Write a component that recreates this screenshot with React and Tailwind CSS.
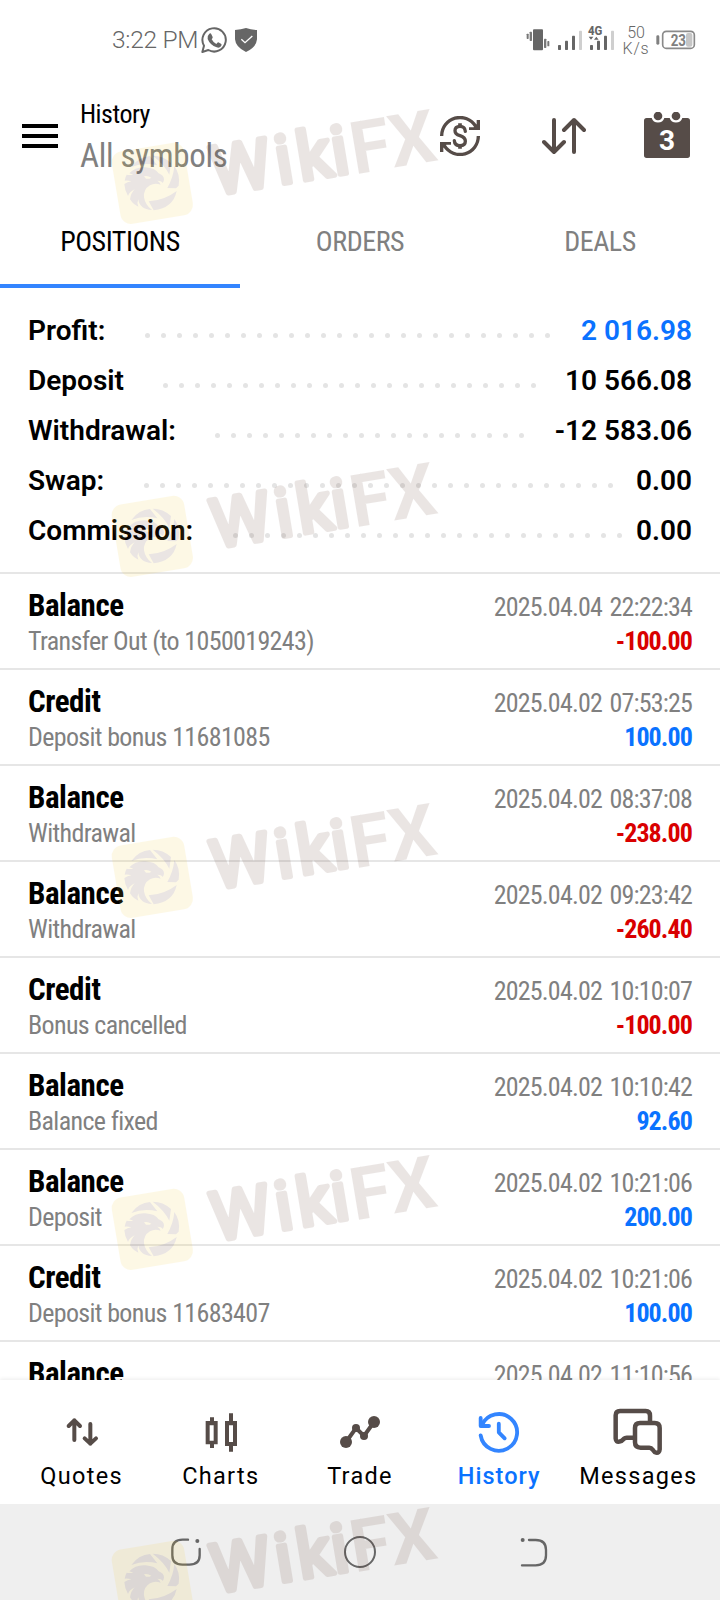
import React from "react";

const SUMMARY = [
  { label: "Profit:", value: "2 016.98", color: "text-[#0a72ff]", dots: 26 },
  { label: "Deposit", value: "10 566.08", color: "text-black", dots: 24 },
  { label: "Withdrawal:", value: "-12 583.06", color: "text-black", dots: 20 },
  { label: "Swap:", value: "0.00", color: "text-black", dots: 30 },
  { label: "Commission:", value: "0.00", color: "text-black", dots: 25 },
];

const DEALS = [
  { type: "Balance", note: "Transfer Out (to 1050019243)", time: "2025.04.04 22:22:34", amount: "-100.00" },
  { type: "Credit", note: "Deposit bonus 11681085", time: "2025.04.02 07:53:25", amount: "100.00" },
  { type: "Balance", note: "Withdrawal", time: "2025.04.02 08:37:08", amount: "-238.00" },
  { type: "Balance", note: "Withdrawal", time: "2025.04.02 09:23:42", amount: "-260.40" },
  { type: "Credit", note: "Bonus cancelled", time: "2025.04.02 10:10:07", amount: "-100.00" },
  { type: "Balance", note: "Balance fixed", time: "2025.04.02 10:10:42", amount: "92.60" },
  { type: "Balance", note: "Deposit", time: "2025.04.02 10:21:06", amount: "200.00" },
  { type: "Credit", note: "Deposit bonus 11683407", time: "2025.04.02 10:21:06", amount: "100.00" },
  { type: "Balance", note: "", time: "2025.04.02 11:10:56", amount: "" },
];

const TABS = ["POSITIONS", "ORDERS", "DEALS"];

const WATERMARKS = ["top-[96px]", "top-[449px]", "top-[790px]", "top-[1142px]", "top-[1494px]"];

/* ICONS */
const WhatsAppIcon = () => (
  <svg className="w-[26px] h-[26px]" viewBox="0 0 78 78" fill="none">
    <path d="M4 75 L9 56 A35 35 0 1 1 22 69 Z" stroke="#666" strokeWidth="6" strokeLinejoin="round" />
    <path
      d="M25 20 q4 -3 6 2 l4 8 q1 3 -3 7 q5 10 14 14 q4 -6 6 -5 l9 5 q2 2 -1 7 q-5 6 -13 3 q-20 -7 -27 -25 q-2 -10 5 -16z"
      fill="#666"
    />
  </svg>
);

const ShieldIcon = () => (
  <svg className="w-[22px] h-6" viewBox="0 0 66 72" fill="none">
    <path d="M33 0 Q48 5 66 6 V34 Q64 58 33 72 Q2 58 0 34 V6 Q18 5 33 0z" fill="#666" />
    <path d="M19 34 L30 44 L52 24" stroke="#fff" strokeWidth="4" />
  </svg>
);

const VibrateIcon = () => (
  <svg className="w-6 h-6" viewBox="0 0 72 72" fill="#666">
    <rect x="21" y="4" width="30" height="63" rx="3" />
    <rect x="2" y="17" width="6" height="16" rx="2" fill="#777" />
    <rect x="11" y="11" width="7" height="28" rx="2" fill="#777" />
    <rect x="54" y="32" width="7" height="28" rx="2" fill="#777" />
    <rect x="64" y="39" width="6" height="16" rx="2" fill="#777" />
  </svg>
);

const SignalBars = () => (
  <svg className="w-[26px] h-6" viewBox="0 0 78 72" fill="#666">
    <rect x="3" y="51" width="9" height="15" rx="2" />
    <rect x="24" y="38" width="9" height="28" rx="2" />
    <rect x="45" y="23" width="9" height="43" rx="2" />
    <rect x="66" y="8" width="9" height="58" rx="2" fill="#cfcfcf" />
  </svg>
);

const SignalBars4G = () => (
  <svg className="w-[27px] h-6 overflow-visible" viewBox="0 0 81 72" fill="#666">
    <text x="0" y="20" fontSize="37" fontWeight="800" fontFamily="Roboto" textLength="43" lengthAdjust="spacingAndGlyphs">
      4G
    </text>
    <path d="M2 26 h14 l-7 9z M18 35 h14 l-7 -9z" />
    <rect x="6" y="51" width="9" height="15" rx="2" />
    <rect x="27" y="38" width="9" height="28" rx="2" />
    <rect x="48" y="23" width="9" height="43" rx="2" />
    <rect x="69" y="8" width="9" height="58" rx="2" fill="#cfcfcf" />
  </svg>
);

const BatteryIcon = () => (
  <svg className="w-10 h-5" viewBox="0 0 120 60" fill="none">
    <rect x="1" y="16" width="9" height="28" rx="4" fill="#808080" />
    <rect x="20" y="4" width="95" height="51" rx="11" stroke="#8a8a8a" strokeWidth="5" />
    <rect x="90" y="9" width="19" height="41" rx="6" fill="#c6c6c6" />
    <text x="44" y="47" fontSize="47" fontWeight="700" fontFamily="Roboto" fill="#808080" textLength="46" lengthAdjust="spacingAndGlyphs">
      23
    </text>
  </svg>
);

const CurrencyIcon = () => (
  <svg className="w-10 h-10" viewBox="0 0 120 120" fill="none" stroke="#564c48" strokeWidth="10">
    <path d="M5 60 A55 55 0 0 1 107 31" />
    <path d="M115 60 A55 55 0 0 1 13 89" />
    <path d="M120 12 V42 H87 V34 H101 L110 24 V12z" fill="#564c48" stroke="none" />
    <path d="M0 108 V78 H33 V86 H19 L10 96 V108z" fill="#564c48" stroke="none" />
    <path
      d="M76 46 Q75 31 60 31 Q45 31 45 44 Q45 54 60 59 Q76 64 76 76 Q76 89 60 89 Q44 89 43 74"
      strokeLinecap="round"
    />
    <path d="M60 22 V31 M60 89 V98" strokeWidth="11" />
  </svg>
);

const SortIcon = () => (
  <svg className="w-11 h-10" viewBox="0 0 132 120" fill="none" stroke="#564c48" strokeWidth="12" strokeLinecap="round" strokeLinejoin="round">
    <path d="M36 12 V108 M6 78 L36 108 L66 78" />
    <path d="M96 108 V12 M66 42 L96 12 L126 42" />
  </svg>
);

const CalendarIcon = () => (
  <svg className="w-[46px] h-[46px]" viewBox="0 0 138 138" fill="#564c48">
    <path d="M8 18 H23 A20 20 0 0 0 61 18 H77 A20 20 0 0 0 115 18 H130 Q138 18 138 26 V130 Q138 138 130 138 H8 Q0 138 0 130 V26 Q0 18 8 18z" />
    <circle cx="42" cy="12" r="13" />
    <circle cx="96" cy="12" r="13" />
    <text x="69" y="114" fontSize="84" fontWeight="700" fontFamily="Roboto" fill="#fff" textAnchor="middle">
      3
    </text>
  </svg>
);

const QuotesIcon = () => (
  <svg className="w-12 h-12" viewBox="0 0 144 144" fill="none" stroke="#564c48" strokeWidth="12" strokeLinecap="round" strokeLinejoin="round">
    <path d="M49 96 V37 M32 54 L49 37 L66 54" />
    <path d="M97 48 V107 M80 91 L97 107 L114 91" />
  </svg>
);

const ChartsIcon = () => (
  <svg className="w-12 h-12" viewBox="0 0 144 144" fill="#564c48">
    <path fillRule="evenodd" d="M39 28 h12 v11 h11 v70 h-11 v11 h-12 v-11 h-13 v-70 h13z M38 52 v46 h12 v-46z" />
    <path fillRule="evenodd" d="M96 16 h12 v23 h12 v75 h-12 v17 h-12 v-17 h-12 v-75 h12z M96 52 v50 h12 v-50z" />
  </svg>
);

const TradeIcon = () => (
  <svg className="w-12 h-12" viewBox="0 0 144 144" fill="#564c48">
    <path d="M30 102 L60 60 L84 84 L114 42" fill="none" stroke="#564c48" strokeWidth="12" />
    <circle cx="30" cy="102" r="18" />
    <circle cx="60" cy="60" r="12" />
    <circle cx="84" cy="84" r="12" />
    <circle cx="114" cy="42" r="18" />
  </svg>
);

const HistoryIcon = () => (
  <svg className="w-12 h-12" viewBox="0 0 144 144" fill="none" stroke="#3385ff" strokeWidth="11.5" strokeLinecap="round" strokeLinejoin="round">
    <path d="M17 82 A55 55 0 1 0 21 51" />
    <path d="M17 30 V54 H42" />
    <path d="M71.4 47 V73 L89 91" />
  </svg>
);

const MessagesIcon = () => (
  <svg className="w-12 h-12 overflow-visible" viewBox="0 0 144 144" fill="none" stroke="#564c48" strokeWidth="13.5" strokeLinecap="round" strokeLinejoin="round">
    <path d="M108 41 V23 Q108 9 95 9 H18 Q5 9 5 22 V92 Q6 103 16 101 Q24 99 30 92 Q33 89 38 89 H58" />
    <path d="M78 45 H122 Q137 45 137 60 V124 Q136 136 126 134 Q121 133 116 125 Q112 119 106 119 H80 Q63 119 63 103 V60 Q63 45 78 45z" />
  </svg>
);

const NAV = [
  { label: "Quotes", icon: QuotesIcon },
  { label: "Charts", icon: ChartsIcon },
  { label: "Trade", icon: TradeIcon },
  { label: "History", icon: HistoryIcon, active: true },
  { label: "Messages", icon: MessagesIcon },
];

const Watermark = ({ top }) => (
  <svg className={`absolute left-[100px] w-[360px] h-[140px] opacity-[0.11] pointer-events-none ${top}`} viewBox="0 0 1080 420">
    <rect x="47" y="152" width="220" height="220" rx="32" fill="#f4c820" transform="rotate(-9.5 157 262)" />
    <g fill="#4a1f10" transform="translate(24 126)">
      {/* shutter blades */}
      <path d="M70 87 Q92 56 126 54 L148 82 Q108 72 70 87z" />
      <path d="M134 53 Q166 53 189 75 L184 110 Q168 78 134 53z" />
      <path d="M199 84 Q218 110 212 143 L204 151 L178 150 Q196 118 199 84z" />
      <path d="M206 159 Q196 210 137 217 L122 190 Q168 188 206 159z" />
      {/* eagle */}
      <path d="M64 106 Q82 86 112 88 Q142 90 152 106 Q168 112 168 124 Q168 130 164 135 Q160 128 148 128 Q156 133 158 140 Q140 134 126 142 Q106 154 108 178 Q112 202 132 216 Q112 215 104 208 Q92 198 91 184 Q86 194 91 206 Q76 200 66 184 Q68 166 80 154 Q64 162 60 174 Q50 158 49 138 Q58 132 70 130 Q58 126 50 128 Q52 116 56 110 Q66 112 76 110z" />
      <path d="M108 115 Q118 112 130 119 Q122 124 114 122z" fill="#f4c820" />
    </g>
    <g transform="translate(352 304) rotate(-9.5)" fill="#4a1f10" fontFamily="Roboto">
      <text
        x="-6 190 256 360"
        y="-8"
        fontSize="202"
        fontWeight="400"
        stroke="#4a1f10"
        strokeWidth="16"
        strokeLinejoin="round"
      >
        Wiki
      </text>
      <text x="417 536" y="0" fontSize="219" fontWeight="700">
        FX
      </text>
    </g>
  </svg>
);

const StatusBar = () => (
  <div className="h-20 flex items-center justify-between pl-[112px] pr-6 text-[#666]">
    <div className="flex items-center">
      <span className="text-[24.5px] font-[350] tracking-[-0.3px] mt-px">3:22 PM</span>
      <div className="ml-[3px] flex items-center gap-2">
        <WhatsAppIcon />
        <ShieldIcon />
      </div>
    </div>
    <div className="flex items-center">
      <VibrateIcon />
      <div className="ml-[7px] flex gap-[5px]">
        <SignalBars />
        <SignalBars4G />
      </div>
      <div className="ml-[9px] mt-0.5 w-6 flex flex-col items-center text-[16px] leading-4 font-[350]">
        <span>50</span>
        <span className="tracking-[0.8px]">K/s</span>
      </div>
      <div className="ml-2">
        <BatteryIcon />
      </div>
    </div>
  </div>
);

const Header = () => (
  <header className="h-28 flex items-center justify-between pl-[22px] pr-[30px]">
    <div className="flex items-center">
      <div className="w-9 flex flex-col gap-1.5">
        <div className="h-1 bg-black"></div>
        <div className="h-1 bg-black"></div>
        <div className="h-1 bg-black"></div>
      </div>
      <div className="ml-[22px] font-stretch-condensed">
        <h1 className="text-[26px] leading-[38px] tracking-[-0.5px]">History</h1>
        <p className="text-[33px] leading-[45px] tracking-[-0.3px] text-[#808080]">All symbols</p>
      </div>
    </div>
    <div className="flex items-center">
      <CurrencyIcon />
      <div className="ml-[62px]">
        <SortIcon />
      </div>
      <div className="ml-[58px] -mt-0.5">
        <CalendarIcon />
      </div>
    </div>
  </header>
);

const SummaryRow = ({ label, value, color, dots }) => (
  <div className="h-[50px] flex items-center text-[28px] font-[650]">
    <span>{label}</span>
    <div className="ml-[34px] mt-[9px] flex-1 flex">
      {Array.from({ length: dots }).map((_, i) => (
        <div key={i} className="w-4 shrink-0 flex items-center justify-center">
          <div className="w-[5px] h-[5px] rounded-full bg-[#e4e4e4]"></div>
        </div>
      ))}
    </div>
    <span className={color}>{value}</span>
  </div>
);

const DealRow = ({ type, note, time, amount }) => (
  <div className="h-24 shrink-0 border-t-2 border-[#e6e6e6] px-7 flex justify-between font-stretch-condensed">
    <div className="pt-3.5">
      <p className="text-[31px] leading-9 font-bold tracking-[-0.45px]">{type}</p>
      <p className="text-[26px] leading-[34px] tracking-[-0.65px] text-[#808080]">{note}</p>
    </div>
    <div className="pt-4 text-right text-[26px] leading-[34px]">
      <p className="tracking-[-0.82px] [word-spacing:2.3px] text-[#808080]">{time}</p>
      <p
        className={`font-bold tracking-[-0.9px] ${
          amount.startsWith("-") ? "text-[#d90000]" : "text-[#0a72ff]"
        }`}
      >
        {amount}
      </p>
    </div>
  </div>
);

const App = () => {
  return (
    <div className="relative w-[720px] h-[1600px] overflow-hidden flex flex-col bg-white text-black font-['Roboto',sans-serif]">
      <StatusBar />
      <Header />

      {/* TABS */}
      <div className="h-24 grid grid-cols-3 text-[28px] tracking-[-0.45px] font-stretch-condensed">
        {TABS.map((tab, i) => (
          <div
            key={tab}
            className={`pt-[7px] border-b-4 flex items-center justify-center ${
              i === 0 ? "border-[#3385ff]" : "border-transparent text-[#808080]"
            }`}
          >
            {tab}
          </div>
        ))}
      </div>

      {/* SUMMARY */}
      <div className="px-7 pt-[18px] pb-4">
        {SUMMARY.map((row) => (
          <SummaryRow key={row.label} {...row} />
        ))}
      </div>

      {/* DEALS */}
      <div className="flex-1 min-h-0 overflow-hidden flex flex-col">
        {DEALS.map((deal, i) => (
          <DealRow key={i} {...deal} />
        ))}
      </div>

      {/* BOTTOM NAV */}
      <nav className="h-[124px] shrink-0 px-3 pt-7 grid grid-cols-5 bg-white shadow-[0_-1px_4px_rgba(0,0,0,0.08)]">
        {NAV.map(({ label, icon: Icon, active }) => (
          <div key={label} className="flex flex-col items-center">
            <Icon />
            <span
              className={`mt-[5px] text-[23.5px] leading-[30px] ${
                active ? "font-medium tracking-[1px] text-[#0a72ff]" : "font-[380] tracking-[1.3px]"
              }`}
            >
              {label}
            </span>
          </div>
        ))}
      </nav>

      {/* SYSTEM BUTTONS */}
      <div className="h-24 shrink-0 bg-[#efefef] flex items-center justify-center gap-[142px]">
        <svg className="w-8 h-8" viewBox="0 0 96 96" fill="none" stroke="#666" strokeWidth="7" strokeLinecap="round">
          <path d="M54 11 H38 Q7 11 7 40 V58 Q7 86 37 86 H58 Q89 86 89 58 V39" />
          <circle cx="82" cy="15" r="6" fill="#666" stroke="none" />
        </svg>
        <svg className="w-8 h-8" viewBox="0 0 96 96" fill="none" stroke="#666" strokeWidth="6">
          <circle cx="48" cy="48" r="45" />
        </svg>
        <svg className="w-8 h-8" viewBox="0 0 96 96" fill="none" stroke="#666" strokeWidth="7" strokeLinecap="round">
          <path d="M33 12 H53 Q84 12 84 42 V58 Q84 88 53 88 H12" />
          <circle cx="14" cy="12" r="6" fill="#666" stroke="none" />
        </svg>
      </div>

      {WATERMARKS.map((top) => (
        <Watermark key={top} top={top} />
      ))}
    </div>
  );
};

export default App;
